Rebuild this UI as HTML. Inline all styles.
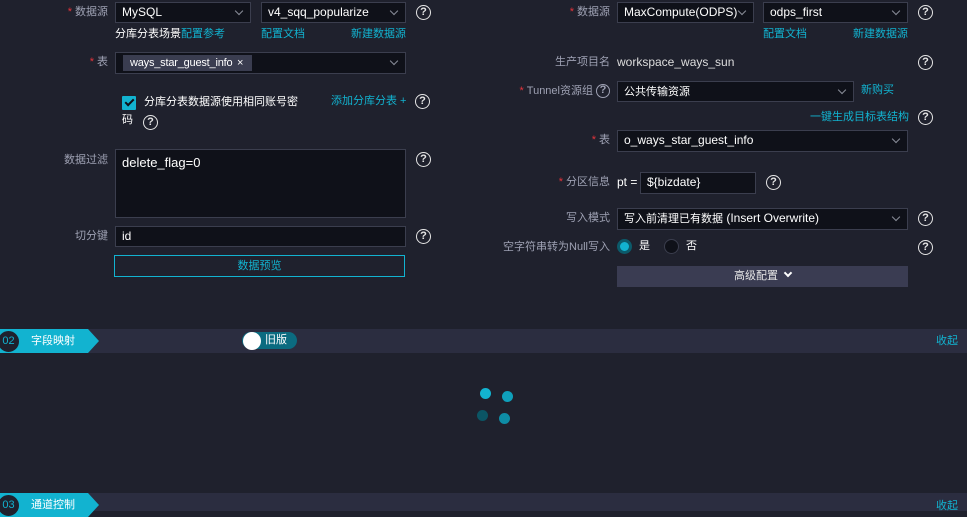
<!DOCTYPE html>
<html><head><meta charset="utf-8"><style>
*{margin:0;padding:0;box-sizing:border-box}
body{width:967px;height:511px;overflow:hidden;background:#1f212d;font-family:"Liberation Sans","Noto Sans CJK SC",sans-serif;font-size:12px;color:#fff;position:relative}
.a{position:absolute;white-space:nowrap}
.c{font-size:11px}
.lb{position:absolute;color:#9ea1b3;text-align:right;white-space:nowrap;line-height:14px;font-size:11px}
.lb b{color:#e5343b;font-weight:normal;margin-right:3px}
.in{position:absolute;background:#0f1119;border:1px solid #3b3e4e;color:#fff;padding-left:6px;line-height:18px;white-space:nowrap}
.ar{position:absolute;right:8px;top:5px;width:6px;height:6px;border-right:1.2px solid #8a8d99;border-bottom:1.2px solid #8a8d99;transform:rotate(45deg)}
.q{position:absolute;width:15px;height:15px;border:1.5px solid #e6e6e6;border-radius:50%;color:#e6e6e6;font-size:11px;font-weight:bold;text-align:center;line-height:12px}
.lk{position:absolute;color:#12b3d0;white-space:nowrap;line-height:14px;font-size:11px}
.bar{position:absolute;left:0;width:967px;height:24px;background:#2b2d40}
.tag{position:absolute;left:0;top:0;width:100px;height:24px;background:#12b3d0;clip-path:polygon(0 0,88px 0,99px 12px,88px 24px,0 24px)}
.num{position:absolute;left:-3px;top:1px;width:23px;height:23px;border-radius:50%;background:#1f212d;border:1.5px solid #12b3d0;color:#12b3d0;font-size:11px;text-align:center;line-height:20px}
.dot{position:absolute;border-radius:50%;width:11px;height:11px}
</style></head><body>
<!-- left -->
<div class="lb" style="right:859px;top:5px"><b>*</b>数据源</div>
<div class="in" style="left:115px;top:2px;width:136px;height:21px">MySQL<i class="ar"></i></div>
<div class="in" style="left:261px;top:2px;width:145px;height:21px">v4_sqq_popularize<i class="ar"></i></div>
<div class="q" style="left:416px;top:5px">?</div>
<div class="a c" style="left:115px;top:27px;line-height:14px">分库分表场景<span style="color:#12b3d0">配置参考</span></div>
<div class="lk" style="left:261px;top:27px">配置文档</div>
<div class="lk" style="left:351px;top:27px">新建数据源</div>

<div class="lb" style="right:859px;top:55px"><b>*</b>表</div>
<div class="in" style="left:115px;top:52px;width:291px;height:22px"><i class="ar"></i></div>
<div class="a" style="left:123px;top:55px;width:129px;height:16px;background:#3a3d50;padding-left:7px;line-height:16px;font-size:11px;letter-spacing:-0.2px">ways_star_guest_info</div>
<div class="a" style="left:237px;top:55px;line-height:16px;font-size:11px">×</div>

<div class="a" style="left:122px;top:96px;width:14px;height:14px;background:#12b3d0;border-radius:1px"></div>
<div class="a" style="left:127px;top:97px;width:5px;height:9px;border-right:2px solid #0f1119;border-bottom:2px solid #0f1119;transform:rotate(45deg)"></div>
<div class="a c" style="left:144px;top:95px;line-height:14px">分库分表数据源使用相同账号密</div>
<div class="a c" style="left:122px;top:113px;line-height:14px">码</div>
<div class="q" style="left:143px;top:115px">?</div>
<div class="lk" style="left:331px;top:94px">添加分库分表 +</div>
<div class="q" style="left:415px;top:94px">?</div>

<div class="lb" style="right:859px;top:153px">数据过滤</div>
<div class="in" style="left:115px;top:149px;width:291px;height:69px;padding-top:4px;font-size:13px">delete_flag=0</div>
<div class="q" style="left:416px;top:152px">?</div>

<div class="lb" style="right:859px;top:229px">切分键</div>
<div class="in" style="left:115px;top:226px;width:291px;height:21px">id</div>
<div class="q" style="left:416px;top:229px">?</div>
<div class="a c" style="left:114px;top:255px;width:291px;height:22px;border:1px solid #12b3d0;color:#12b3d0;text-align:center;line-height:20px">数据预览</div>

<!-- right -->
<div class="lb" style="right:357px;top:5px"><b>*</b>数据源</div>
<div class="in" style="left:617px;top:2px;width:137px;height:21px">MaxCompute(ODPS)<i class="ar"></i></div>
<div class="in" style="left:763px;top:2px;width:145px;height:21px">odps_first<i class="ar"></i></div>
<div class="q" style="left:918px;top:5px">?</div>
<div class="lk" style="left:763px;top:27px">配置文档</div>
<div class="lk" style="left:853px;top:27px">新建数据源</div>

<div class="lb" style="right:357px;top:55px">生产项目名</div>
<div class="a" style="left:617px;top:55px;line-height:14px;color:#ddd">workspace_ways_sun</div>
<div class="q" style="left:918px;top:55px">?</div>

<div class="lb" style="right:374px;top:84px"><b>*</b>Tunnel资源组</div>
<div class="q" style="left:596px;top:84px;width:14px;height:14px;border-color:#9ea1b3;color:#9ea1b3;line-height:11px">?</div>
<div class="in" style="left:617px;top:81px;width:237px;height:21px"><span class="c">公共传输资源</span><i class="ar"></i></div>
<div class="lk" style="left:861px;top:83px">新购买</div>
<div class="lk" style="left:810px;top:110px">一键生成目标表结构</div>
<div class="q" style="left:918px;top:110px">?</div>

<div class="lb" style="right:357px;top:133px"><b>*</b>表</div>
<div class="in" style="left:617px;top:130px;width:291px;height:22px">o_ways_star_guest_info<i class="ar"></i></div>

<div class="lb" style="right:357px;top:175px"><b>*</b>分区信息</div>
<div class="a" style="left:617px;top:175px;line-height:14px">pt =</div>
<div class="in" style="left:640px;top:172px;width:116px;height:22px">${bizdate}</div>
<div class="q" style="left:766px;top:175px">?</div>

<div class="lb" style="right:357px;top:211px">写入模式</div>
<div class="in" style="left:617px;top:208px;width:291px;height:22px"><span class="c">写入前清理已有数据</span> (Insert Overwrite)<i class="ar"></i></div>
<div class="q" style="left:918px;top:211px">?</div>

<div class="lb" style="right:357px;top:240px">空字符串转为Null写入</div>
<div class="a" style="left:617px;top:239px;width:15px;height:15px;border-radius:50%;background:#0c5a6a;"></div>
<div class="a" style="left:620px;top:242px;width:9px;height:9px;border-radius:50%;background:#12b3d0"></div>
<div class="a c" style="left:639px;top:239px;line-height:14px">是</div>
<div class="a" style="left:664px;top:239px;width:15px;height:15px;border-radius:50%;background:#0f1119;border:1px solid #3b3e4e"></div>
<div class="a c" style="left:686px;top:239px;line-height:14px">否</div>
<div class="q" style="left:918px;top:240px">?</div>

<div class="a c" style="left:617px;top:266px;width:291px;height:21px;background:#3a3c52;text-align:center;line-height:21px;color:#e6e6e6">高级配置 <span style="display:inline-block;width:6px;height:6px;border-right:2px solid #fff;border-bottom:2px solid #fff;transform:rotate(45deg);margin-left:4px;position:relative;top:-3px"></span></div>

<!-- section bars -->
<div class="bar" style="top:329px"><div class="tag"></div><div class="num">02</div>
<div class="a c" style="left:31px;top:5px;line-height:14px">字段映射</div>
<div class="a" style="left:242px;top:3px;width:55px;height:17px;border-radius:9px;background:#0b6b80"></div>
<div class="a" style="left:243px;top:3px;width:18px;height:18px;border-radius:50%;background:#fff"></div>
<div class="a c" style="left:265px;top:4px;line-height:14px">旧版</div>
<div class="lk" style="left:936px;top:5px">收起</div></div>

<div class="dot" style="left:480px;top:388px;background:#12b3d0"></div>
<div class="dot" style="left:502px;top:391px;background:#0fa0bb"></div>
<div class="dot" style="left:477px;top:410px;background:#0b5564"></div>
<div class="dot" style="left:499px;top:413px;background:#0e8ca5"></div>

<div class="bar" style="top:493px;height:18px"><div class="tag"></div><div class="num">03</div>
<div class="a c" style="left:31px;top:5px;line-height:14px">通道控制</div>
<div class="lk" style="left:936px;top:6px">收起</div></div>
</body></html>
